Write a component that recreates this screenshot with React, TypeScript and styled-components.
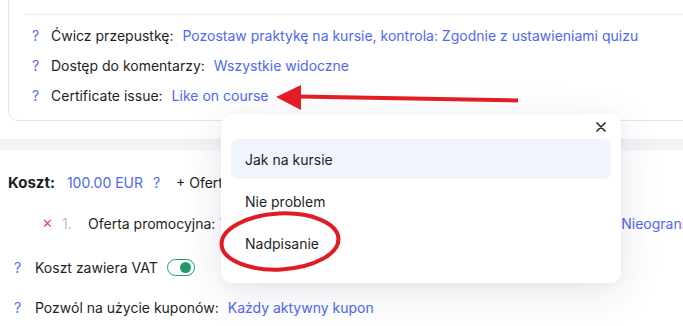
import React from 'react'
import styled, { createGlobalStyle } from 'styled-components'

const GlobalStyle = createGlobalStyle`
  html, body {
    margin: 0;
    padding: 0;
    background: #ffffff;
    font-family: Inter, "Noto Sans", sans-serif;
    font-size: 14px;
    color: #1d1f24;
    overflow: hidden;
  }
`

const Page = styled.div`
  position: relative;
  width: 683px;
  height: 326px;
  overflow: hidden;
  background: #ffffff;
`

// --- top settings card ---
const Card = styled.div`
  margin: -20px -30px 0 8px;
  padding: 33px 0 10px 15px;
  border: 1px solid #e4e5ec;
  border-radius: 10px;
  background: #ffffff;
`

const Divider = styled.div`
  height: 1px;
  background: #eceef3;
  margin-bottom: 5px;
`

const Row = styled.div<{ height?: number }>`
  display: flex;
  align-items: center;
  height: ${({ height }) => height ?? 30}px;
  white-space: nowrap;
`

const Help = styled.span<{ gap?: number; left?: number }>`
  color: #5068f2;
  width: 8px;
  margin-left: ${({ left }) => left ?? 8}px;
  margin-right: ${({ gap }) => gap ?? 11}px;
`

const Label = styled.span<{ bold?: boolean }>`
  font-weight: ${({ bold }) => (bold ? 700 : 400)};
  font-size: ${({ bold }) => (bold ? 15 : 14)}px;
  color: #1d1f24;
  margin-right: 9px;
`

const Value = styled.span`
  color: #4f68f2;
`

// --- gap between cards ---
const Band = styled.div`
  height: 12px;
  margin-top: 18px;
  background: linear-gradient(#eef0f4, #f6f7f9);
`

const Section = styled.div`
  padding: 16px 0 0 8px;
`

const Remove = styled.span`
  color: #e0505c;
  font-size: 13px;
  width: 20px;
  margin-left: 34px;
`

const Index = styled.span`
  color: #b9c0d4;
  width: 26px;
`

const Push = styled.span`
  margin-left: auto;
  margin-right: -42px;
`

const Toggle = styled.span`
  display: inline-flex;
  align-items: center;
  justify-content: flex-end;
  box-sizing: border-box;
  width: 28px;
  height: 17px;
  margin-left: 9px;
  padding: 0 3px;
  border: 1.5px solid #219a6a;
  border-radius: 9px;
  &::after {
    content: '';
    width: 11px;
    height: 11px;
    border-radius: 50%;
    background: #219a6a;
  }
`

// --- dropdown popup ---
const Popup = styled.div`
  position: absolute;
  left: 221px;
  top: 114px;
  width: 400px;
  height: 169px;
  box-sizing: border-box;
  padding: 0 10px;
  background: #ffffff;
  border-radius: 11px;
  box-shadow: 0 10px 44px rgba(30, 40, 80, 0.11), 0 2px 10px rgba(30, 40, 80, 0.04);
`

const PopupHead = styled.div`
  display: flex;
  justify-content: flex-end;
  align-items: center;
  height: 25px;
  padding-right: 5px;
`

const Option = styled.div<{ active?: boolean }>`
  display: flex;
  align-items: center;
  height: 40px;
  margin-bottom: 2px;
  padding-left: 14px;
  border-radius: 7px;
  color: #1d1f24;
  background: ${({ active }) => (active ? '#f0f4fd' : 'transparent')};
`

const Overlay = styled.svg`
  position: absolute;
  left: 0;
  top: 0;
  pointer-events: none;
`

export default function App() {
  return (
    <Page>
      <GlobalStyle />
      <Card>
        <Divider />
        <Row>
          <Help>?</Help>
          <Label>Ćwicz przepustkę:</Label>
          <Value>Pozostaw praktykę na kursie, kontrola: Zgodnie z ustawieniami quizu</Value>
        </Row>
        <Row>
          <Help>?</Help>
          <Label>Dostęp do komentarzy:</Label>
          <Value>Wszystkie widoczne</Value>
        </Row>
        <Row>
          <Help>?</Help>
          <Label>Certificate issue:</Label>
          <Value>Like on course</Value>
        </Row>
      </Card>

      <Band />

      <Section>
        <Row>
          <Label bold style={{ marginRight: 12 }}>Koszt:</Label>
          <Value>100.00 EUR</Value>
          <Help left={10} gap={15}>?</Help>
          <span>+ Oferta</span>
        </Row>
        <Row height={52}>
          <Remove>✕</Remove>
          <Index>1.</Index>
          <Label style={{ marginRight: 4 }}>Oferta promocyjna:</Label>
          <Value>77</Value>
          <Push>
            <Value>Nieograniczona</Value>
          </Push>
        </Row>
        <Row height={36}>
          <Help left={6} gap={13}>?</Help>
          <Label style={{ marginRight: 0 }}>Koszt zawiera VAT</Label>
          <Toggle />
        </Row>
        <Row height={44}>
          <Help left={6} gap={13}>?</Help>
          <Label>Pozwól na użycie kuponów:</Label>
          <Value>Każdy aktywny kupon</Value>
        </Row>
      </Section>

      <Popup>
        <PopupHead>
          <svg width="10" height="10" viewBox="0 0 10 10">
            <path d="M1 1 L9 9 M9 1 L1 9" stroke="#2a2c33" strokeWidth="1.7" strokeLinecap="round" />
          </svg>
        </PopupHead>
        <Option active>Jak na kursie</Option>
        <Option>Nie problem</Option>
        <Option>Nadpisanie</Option>
      </Popup>

      <Overlay width="683" height="326" viewBox="0 0 683 326">
        <path d="M299 94.5 L518 98.5 L518 102.5 L299 98.5 Z" fill="#e31d23" />
        <path d="M276 97 L301 85 L301 110 Z" fill="#e31d23" />
        <ellipse
          cx="280"
          cy="241.5"
          rx="58.5"
          ry="28"
          transform="rotate(-3 280 241.5)"
          fill="none"
          stroke="#e11b22"
          strokeWidth="4"
        />
      </Overlay>
    </Page>
  )
}
